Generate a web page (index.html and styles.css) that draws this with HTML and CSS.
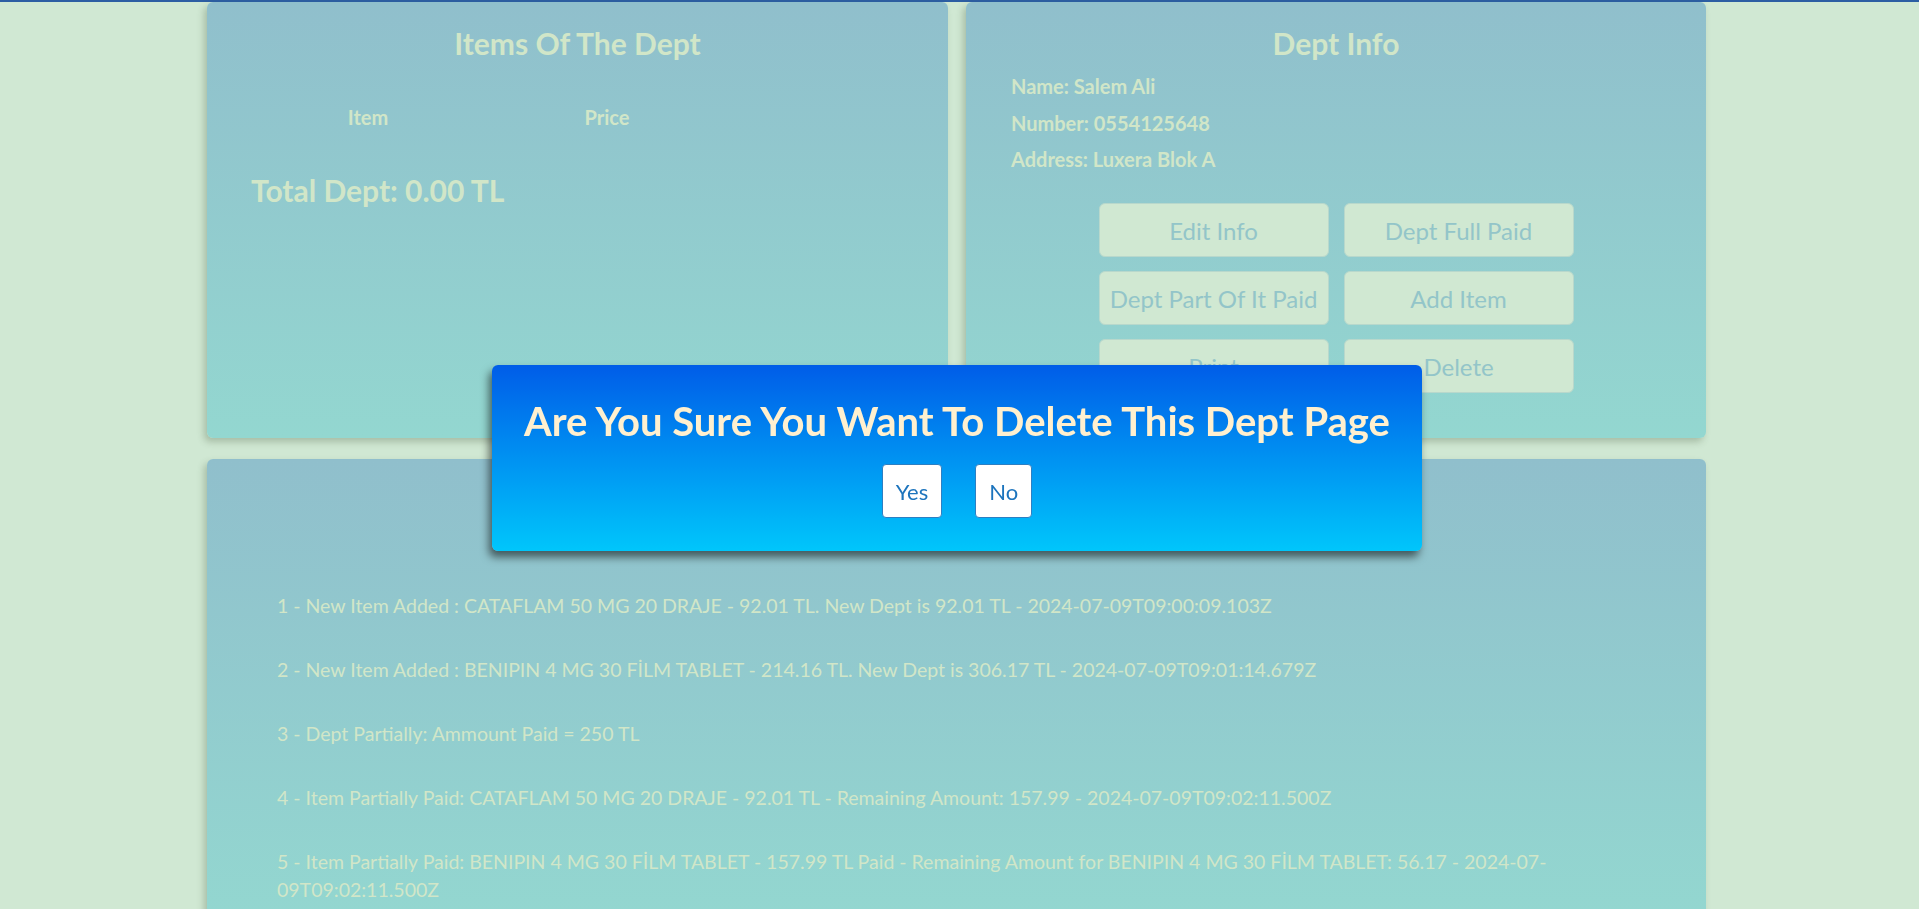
FILE: index.html
```html
<!DOCTYPE html>
<html lang="en">
<head>
<meta charset="utf-8">
<title>Dept Page</title>
<link rel="stylesheet" href="styles.css">
</head>
<body>
<div class="topbar"></div>
<main class="page">
  <section class="top-row">
    <div class="card items-card">
      <h2 class="card-title">Items Of The Dept</h2>
      <div class="items-head">
        <span>Item</span>
        <span>Price</span>
      </div>
      <h2 class="total">Total Dept: 0.00 TL</h2>
    </div>
    <div class="card info-card">
      <h2 class="card-title">Dept Info</h2>
      <div class="info-lines">
        <p>Name: Salem Ali</p>
        <p>Number: 0554125648</p>
        <p>Address: Luxera Blok A</p>
      </div>
      <div class="actions">
        <button class="act">Edit Info</button>
        <button class="act">Dept Full Paid</button>
        <button class="act">Dept Part Of It Paid</button>
        <button class="act">Add Item</button>
        <button class="act">Print</button>
        <button class="act">Delete</button>
      </div>
    </div>
  </section>
  <section class="card history-card">
    <div class="history">
      <p>1 - New Item Added : CATAFLAM 50 MG 20 DRAJE - 92.01 TL. New Dept is 92.01 TL - 2024-07-09T09:00:09.103Z</p>
      <p>2 - New Item Added : BENIPIN 4 MG 30 FİLM TABLET - 214.16 TL. New Dept is 306.17 TL - 2024-07-09T09:01:14.679Z</p>
      <p>3 - Dept Partially: Ammount Paid = 250 TL</p>
      <p>4 - Item Partially Paid: CATAFLAM 50 MG 20 DRAJE - 92.01 TL - Remaining Amount: 157.99 - 2024-07-09T09:02:11.500Z</p>
      <p>5 - Item Partially Paid: BENIPIN 4 MG 30 FİLM TABLET - 157.99 TL Paid - Remaining Amount for BENIPIN 4 MG 30 FİLM TABLET: 56.17 - 2024-07-09T09:02:11.500Z</p>
    </div>
  </section>
</main>
<div class="modal">
  <h1 class="modal-title">Are You Sure You Want To Delete This Dept Page</h1>
  <div class="modal-actions">
    <button class="modal-btn">Yes</button>
    <button class="modal-btn">No</button>
  </div>
</div>
</body>
</html>
```
FILE: styles.css
```css
* { box-sizing: border-box; }
html, body { height: 100%; }
body {
  margin: 0;
  background: #d0e8d3;
  font-family: Lato, "Open Sans", sans-serif;
  color: #d1e6c8;
  overflow: hidden;
}
.topbar {
  height: 2px;
  background: #2c5ea3;
}
.page {
  padding: 0 213px 0 207px;
  display: flex;
  flex-direction: column;
  gap: 21px;
}
.top-row {
  display: grid;
  grid-template-columns: 741px 740px;
  gap: 18px;
  height: 436px;
}
.card {
  background: linear-gradient(#90bfcc, #93d7d0);
  border-radius: 6px;
  box-shadow: -3px 4px 7px rgba(60, 80, 50, 0.28);
}
.card-title {
  margin: 0;
  font-size: 30px;
  line-height: 36px;
  font-weight: 700;
  text-align: center;
}
.items-card {
  padding: 23px 44px 0 44px;
}
.items-head {
  margin-top: 44px;
  display: grid;
  grid-template-columns: 234px 244px;
  font-size: 20px;
  line-height: 24px;
  font-weight: 700;
  text-align: center;
}
.total {
  margin: 43px 0 0 0;
  font-size: 30px;
  line-height: 36px;
  font-weight: 700;
}
.info-card {
  padding: 23px 45px 0 45px;
  display: flex;
  flex-direction: column;
}
.info-lines {
  margin-top: 13px;
  display: flex;
  flex-direction: column;
  gap: 12.5px;
}
.info-lines p {
  margin: 0;
  font-size: 20px;
  line-height: 24px;
  font-weight: 700;
}
.actions {
  margin-top: 32px;
  align-self: center;
  display: grid;
  grid-template-columns: 230px 230px;
  grid-auto-rows: 54px;
  column-gap: 15px;
  row-gap: 14px;
}
.act {
  font-family: Lato, "Open Sans", sans-serif;
  font-size: 24px;
  color: #93c5c9;
  background: #d0e8d2;
  border: 1px solid #b8d8cc;
  border-radius: 6px;
  padding: 0;
}
.history-card {
  height: 460px;
  padding: 133px 70px 0 70px;
}
.history p {
  margin: 0 0 36px 0;
  font-size: 19.5px;
  line-height: 28px;
}
.modal {
  position: fixed;
  left: 492px;
  top: 365px;
  width: 930px;
  height: 186px;
  border-radius: 6px;
  background: linear-gradient(#005de8, #00c6fb);
  box-shadow: -3px 6px 8px rgba(0, 0, 0, 0.55);
  padding-top: 32px;
  display: flex;
  flex-direction: column;
  align-items: center;
}
.modal-title {
  margin: 0;
  font-size: 40px;
  line-height: 48px;
  font-weight: 700;
  color: #fff0cf;
  white-space: nowrap;
}
.modal-actions {
  margin-top: 19px;
  display: flex;
  gap: 33px;
}
.modal-btn {
  height: 54px;
  padding: 0 13px;
  font-family: Lato, "Open Sans", sans-serif;
  font-size: 22px;
  color: #1c74bd;
  background: #ffffff;
  border: 1px solid #2d7fc2;
  border-radius: 4px;
}
```
